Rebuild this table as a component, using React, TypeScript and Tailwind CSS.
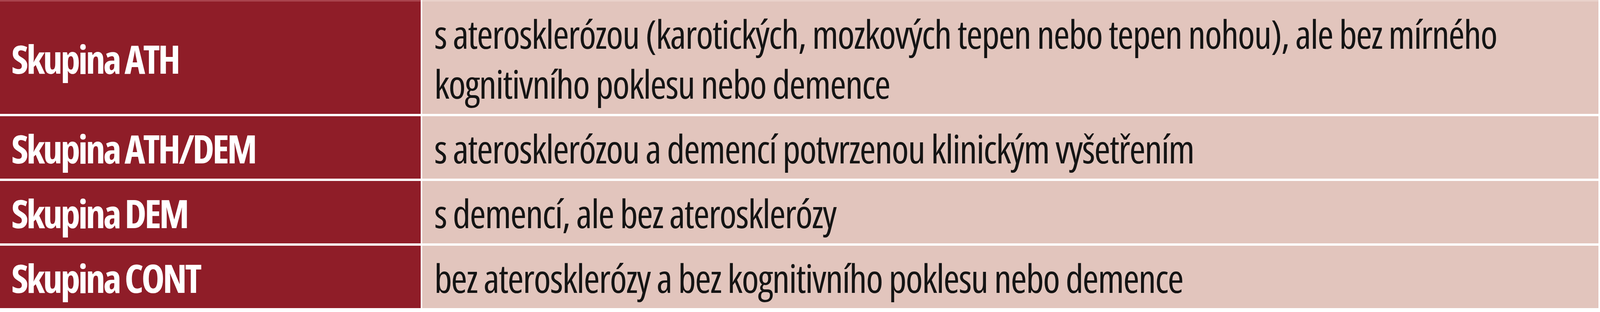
const rows = [
  {
    group: 'Skupina ATH',
    text: 's aterosklerózou (karotických, mozkových tepen nebo tepen nohou), ale bez mírného kognitivního poklesu nebo demence',
  },
  {
    group: 'Skupina ATH/DEM',
    text: 's aterosklerózou a demencí potvrzenou klinickým vyšetřením',
  },
  {
    group: 'Skupina DEM',
    text: 's demencí, ale bez aterosklerózy',
  },
  {
    group: 'Skupina CONT',
    text: 'bez aterosklerózy a bez kognitivního poklesu nebo demence',
  },
];

export default function App() {
  return (
    <div className="w-full h-[800px] bg-white pr-[4px] font-['Open_Sans','Noto_Sans',sans-serif] [font-stretch:75%]">
      <div className="grid grid-cols-[26.33%_1fr] gap-x-[4px] gap-y-[6px]">
        {rows.map((row, i) => (
          <div key={row.group} className="contents">
            {/* group name */}
            <div
              className={`flex items-center bg-[#8f1d28] pl-[29px] pr-[10px] pt-[18px] pb-[14px] ${
                i === 0 ? 'border-t-4 border-[#a9434d]' : ''
              }`}
            >
              <span className="text-[100px] leading-[128px] font-bold tracking-[-5px] text-white">{row.group}</span>
            </div>
            {/* description */}
            <div
              className={`bg-[#e2c5bd] pl-[30px] pr-[4px] pt-[18px] pb-[14px] text-[100px] leading-[128px] tracking-[-2.3px] text-[#141414] ${
                i === 0 ? 'border-t-4 border-[#e9d2cb]' : ''
              }`}
            >
              {row.text}
            </div>
          </div>
        ))}
      </div>
    </div>
  );
}
